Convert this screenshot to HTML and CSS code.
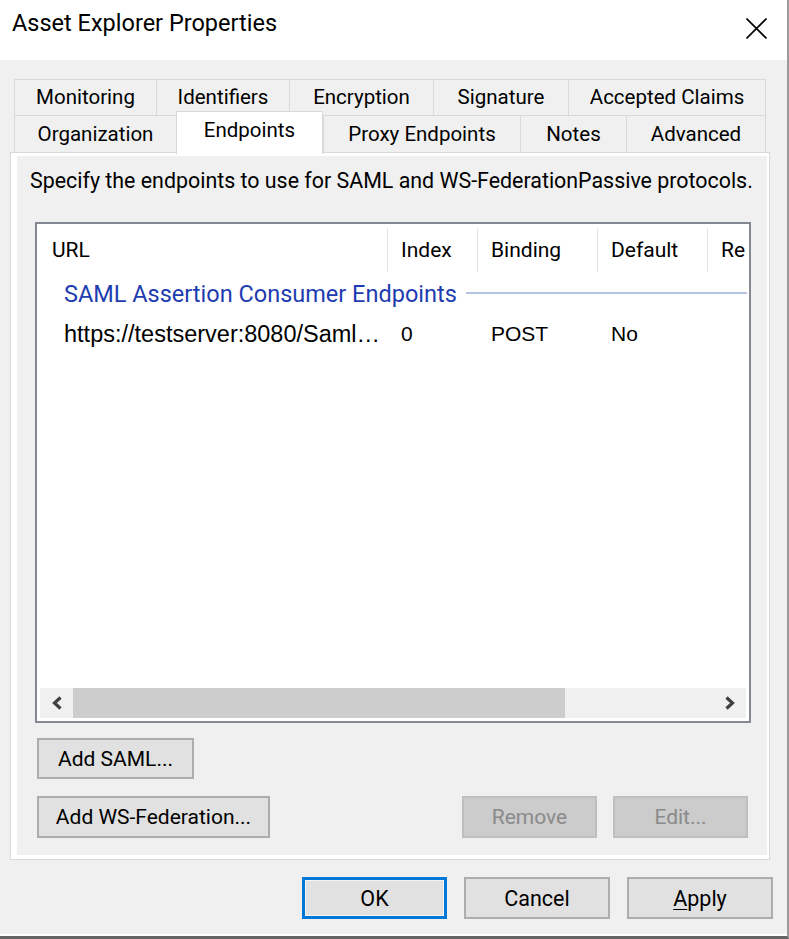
FILE: index.html
```html
<!DOCTYPE html>
<html>
<head>
<meta charset="utf-8">
<link rel="stylesheet" href="styles.css">
</head>
<body>
<div class="window">
  <div class="titlebar">
    <span class="title">Asset Explorer Properties</span>
    <svg class="close" width="21" height="21" viewBox="0 0 21 21"><path d="M0.5 0.5 L20.5 20.5 M20.5 0.5 L0.5 20.5" stroke="#000" stroke-width="1.6" fill="none"/></svg>
  </div>
  <div class="tabs">
    <div class="tabrow row1">
      <div class="tab w-mon">Monitoring</div>
      <div class="tab w-ide">Identifiers</div>
      <div class="tab w-enc">Encryption</div>
      <div class="tab w-sig">Signature</div>
      <div class="tab w-acc last">Accepted Claims</div>
    </div>
    <div class="tabrow row2">
      <div class="tab w-org">Organization</div>
      <div class="tab w-end active">Endpoints</div>
      <div class="tab w-pro">Proxy Endpoints</div>
      <div class="tab w-not">Notes</div>
      <div class="tab w-adv last">Advanced</div>
    </div>
  </div>
  <div class="panel">
    <div class="page">
      <p class="desc">Specify the endpoints to use for SAML and WS-FederationPassive protocols.</p>
      <div class="list">
        <div class="lhead">
          <div class="hc c-url">URL</div>
          <div class="hc c-idx">Index</div>
          <div class="hc c-bin">Binding</div>
          <div class="hc c-def">Default</div>
          <div class="hc c-re">Re</div>
        </div>
        <div class="group">
          <span class="gtext">SAML Assertion Consumer Endpoints</span>
          <span class="gline"></span>
        </div>
        <div class="lrow">
          <div class="rc c-url url">https://testserver:8080/Saml…</div>
          <div class="rc c-idx">0</div>
          <div class="rc c-bin">POST</div>
          <div class="rc c-def">No</div>
          <div class="rc c-re"></div>
        </div>
        <div class="lfill"></div>
        <div class="hscroll">
          <div class="sbtn">
            <svg width="12" height="14" viewBox="0 0 12 14"><path d="M9.5 1.5 L3.5 7 L9.5 12.5" stroke="#404040" stroke-width="3.2" fill="none"/></svg>
          </div>
          <div class="thumb"></div>
          <div class="track"></div>
          <div class="sbtn">
            <svg width="12" height="14" viewBox="0 0 12 14"><path d="M2.5 1.5 L8.5 7 L2.5 12.5" stroke="#404040" stroke-width="3.2" fill="none"/></svg>
          </div>
        </div>
      </div>
      <div class="brow1">
        <button class="btn b-saml">Add SAML...</button>
      </div>
      <div class="brow2">
        <button class="btn b-ws">Add WS-Federation...</button>
        <div class="spacer"></div>
        <button class="btn b-small" disabled>Remove</button>
        <button class="btn b-small" disabled>Edit...</button>
      </div>
    </div>
  </div>
  <div class="footer">
    <button class="btn fbtn default">OK</button>
    <button class="btn fbtn">Cancel</button>
    <button class="btn fbtn"><u>A</u>pply</button>
  </div>
</div>
</body>
</html>
```
FILE: styles.css
```css
* { box-sizing: border-box; }
html, body { margin: 0; padding: 0; background: #f0f0f0; }
body { font-family: Roboto, "Liberation Sans", sans-serif; color: #000; }

.window {
  width: 789px;
  height: 939px;
  background: #f0f0f0;
  border-right: 2px solid #9a9a9a;
  border-bottom: 3px solid #646464;
  box-shadow: inset 0 -2px 0 #ffffff;
  overflow: hidden;
}

.titlebar {
  height: 60px;
  background: #fff;
  display: flex;
  align-items: flex-start;
  padding: 9px 20px 0 12px;
}
.title { font-size: 23.5px; line-height: 28px; }
.close { margin-left: auto; margin-top: 9px; }

.tabs { margin: 19px 0 0 14px; width: 752px; }
.tabrow { display: flex; }
.row1 { height: 36px; }
.row2 { height: 37px; }
.tab {
  border-top: 1px solid #d9d9d9;
  border-left: 1px solid #d9d9d9;
  background: #f0f0f0;
  font-size: 20.5px;
  line-height: 24px;
  text-align: center;
  padding-top: 5px;
  white-space: nowrap;
}
.row2 .tab { padding-top: 6px; }
.tab.last { border-right: 1px solid #d9d9d9; }
.tab.active {
  position: relative;
  z-index: 2;
  background: #fff;
  border-right: 1px solid #d9d9d9;
  margin-top: -4px;
  height: 43px;
  padding-top: 6px;
}
.w-mon { width: 142px; }
.w-ide { width: 133px; }
.w-enc { width: 144px; }
.w-sig { width: 135px; }
.w-acc { width: 198px; }
.w-org { width: 162px; }
.w-end { width: 147px; }
.w-pro { width: 197px; }
.w-not { width: 106px; }
.w-adv { width: 140px; }

.panel {
  margin-left: 10px;
  width: 760px;
  height: 708px;
  background: #fff;
  border: 1px solid #d9d9d9;
  padding: 3px 2px 4px 6px;
}
.page {
  width: 750px;
  height: 699px;
  background: #f0f0f0;
  padding-top: 13px;
}
.desc {
  margin: 0 0 0 13px;
  font-size: 21.4px;
  line-height: 24px;
  white-space: nowrap;
}

.list {
  margin: 29px 0 0 18px;
  width: 716px;
  height: 501px;
  border: 2px solid #848891;
  background: #fff;
  display: flex;
  flex-direction: column;
  overflow: hidden;
}
.lhead { height: 48px; display: flex; align-items: flex-end; flex: none; }
.hc {
  height: 44px;
  border-right: 1px solid #e5e5e5;
  font-size: 21px;
  line-height: 44px;
  padding-left: 13px;
  white-space: nowrap;
  overflow: hidden;
}
.c-url { width: 351px; }
.hc.c-url { padding-left: 15px; }
.c-idx { width: 90px; }
.c-bin { width: 120px; }
.c-def { width: 110px; }
.c-re { flex: 1; border-right: none; }

.group {
  height: 44px;
  flex: none;
  display: flex;
  align-items: center;
  padding-left: 27px;
  padding-right: 2px;
}
.gtext { font-size: 23.5px; color: #1d3cb0; white-space: nowrap; line-height: 28px; }
.gline { flex: 1; height: 2px; background: #b4c3e4; margin-left: 9px; margin-top: -2px; }

.lrow { height: 36px; display: flex; flex: none; }
.rc {
  font-family: "Liberation Sans", Arial, sans-serif;
  font-size: 21px;
  line-height: 36px;
  padding-left: 13px;
  white-space: nowrap;
}
.rc.url { font-size: 23.5px; padding-left: 27px; }
.lfill { flex: 1; }

.hscroll {
  height: 30px;
  flex: none;
  margin: 0 3px 3px 3px;
  background: #f0f0f0;
  display: flex;
}
.sbtn { width: 33px; display: flex; align-items: center; justify-content: center; }
.thumb { width: 492px; background: #cdcdcd; }
.track { flex: 1; }

.btn {
  font-family: Roboto, "Liberation Sans", sans-serif;
  font-size: 21px;
  color: #000;
  background: #e1e1e1;
  border: 2px solid #adadad;
  padding: 0;
  margin: 0;
  height: 41px;
  text-align: center;
}
.btn:disabled { background: #cccccc; border-color: #bfbfbf; color: #8a8a8a; }
.brow1 { margin: 15px 0 0 20px; display: flex; }
.b-saml { width: 157px; }
.brow2 { margin: 17px 19px 0 20px; display: flex; gap: 16px; }
.b-ws { width: 233px; height: 42px; }
.spacer { flex: 1; }
.b-small { width: 135px; height: 42px; }

.footer {
  display: flex;
  justify-content: flex-end;
  gap: 17px;
  padding-right: 14px;
  margin-top: 17px;
}
.fbtn { width: 146px; height: 42px; font-size: 21.5px; }
.fbtn.default { width: 145px; border: 3px solid #0078d7; box-shadow: inset 0 0 0 1px #f4f4f4; }
.fbtn u { text-decoration-thickness: 1px; text-underline-offset: 3px; }
```
